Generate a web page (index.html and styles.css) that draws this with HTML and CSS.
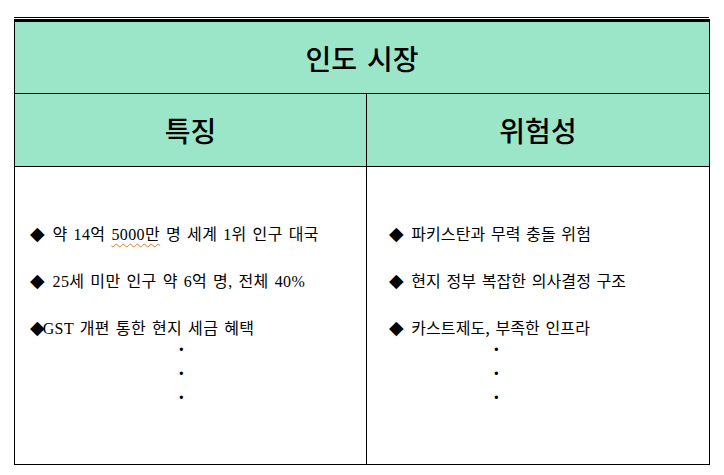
FILE: index.html
```html
<!DOCTYPE html>
<html lang="ko">
<head>
<meta charset="utf-8">
<title>인도 시장</title>
<link rel="stylesheet" href="styles.css">
</head>
<body>
<div class="sheet">
  <div class="rule-thin"></div>
  <div class="rule-thick"></div>
  <div class="table">
    <div class="title">인도 시장</div>
    <div class="row head">
      <div class="cell cell-left">특징</div>
      <div class="cell">위험성</div>
    </div>
    <div class="row body">
      <div class="cell cell-left col col-features">
        <div class="item"><span class="dia">◆</span> 약 14억 <span class="spell">5000만</span> 명 세계 1위 인구 대국</div>
        <div class="item"><span class="dia">◆</span> 25세 미만 인구 약 6억 명, 전체 40%</div>
        <div class="item last"><span class="dia tight">◆</span>GST 개편 통한 현지 세금 혜택</div>
        <div class="dots">
          <div class="dot">·</div>
          <div class="dot">·</div>
          <div class="dot">·</div>
        </div>
      </div>
      <div class="cell col col-risks">
        <div class="item"><span class="dia">◆</span> 파키스탄과 무력 충돌 위험</div>
        <div class="item"><span class="dia">◆</span> 현지 정부 복잡한 의사결정 구조</div>
        <div class="item last"><span class="dia">◆</span> 카스트제도, 부족한 인프라</div>
        <div class="dots">
          <div class="dot">·</div>
          <div class="dot">·</div>
          <div class="dot">·</div>
        </div>
      </div>
    </div>
  </div>
</div>
</body>
</html>
```
FILE: styles.css
```css
html, body {
  margin: 0;
  padding: 0;
  background: #ffffff;
}

.sheet {
  margin: 17px 0 0 14px;
  width: 696px;
  color: #000;
}

.rule-thin {
  width: 695px;
  height: 1px;
  background: #000;
  margin-bottom: 1px;
}

.rule-thick {
  height: 3px;
  background: #000;
}

.table {
  border-left: 1px solid #000;
  border-right: 1px solid #000;
  border-bottom: 1px solid #000;
}

.title {
  height: 71px;
  background: #9be6c9;
  border-bottom: 1px solid #000;
  display: flex;
  align-items: center;
  justify-content: center;
  font-family: "Noto Sans CJK KR", sans-serif;
  font-size: 28px;
  font-weight: 500;
  word-spacing: 2px;
}

.row {
  display: grid;
  grid-template-columns: 352px 342px;
}

.head {
  height: 72px;
  background: #9be6c9;
  border-bottom: 1px solid #000;
}

.head .cell {
  display: flex;
  align-items: center;
  justify-content: center;
  font-family: "Noto Sans CJK KR", sans-serif;
  font-size: 28px;
  font-weight: 500;
}

.cell-left {
  border-right: 1px solid #000;
}

.body {
  height: 297px;
}

.col {
  display: flex;
  flex-direction: column;
  gap: 27px;
  padding-top: 56px;
  font-size: 16px;
}

.col-features {
  padding-left: 15px;
  font-family: "Liberation Serif", "Noto Sans CJK KR", serif;
  letter-spacing: 0.4px;
  word-spacing: 1.5px;
}

.col-risks {
  padding-left: 22px;
  font-family: "Noto Sans CJK KR", sans-serif;
  letter-spacing: 0.1px;
  word-spacing: 1px;
}

.item {
  height: 20px;
  line-height: 20px;
  white-space: nowrap;
}

.item.last {
  margin-bottom: -27px;
}

.dia {
  font-family: "DejaVu Sans", sans-serif;
  font-size: 19px;
  letter-spacing: -2px;
  margin-right: 4px;
}

.dia.tight {
  margin-right: 0;
}

.spell {
  text-decoration: underline wavy #e57a2c;
  text-decoration-thickness: 1px;
  text-underline-offset: 3px;
}

.dots {
  display: flex;
  flex-direction: column;
}

.col-features .dots {
  padding-left: 148px;
}

.col-risks .dots {
  padding-left: 104px;
}

.dot {
  height: 24px;
  line-height: 24px;
  font-family: "Liberation Serif", serif;
  font-size: 20px;
  font-weight: bold;
  letter-spacing: 0;
}
```
